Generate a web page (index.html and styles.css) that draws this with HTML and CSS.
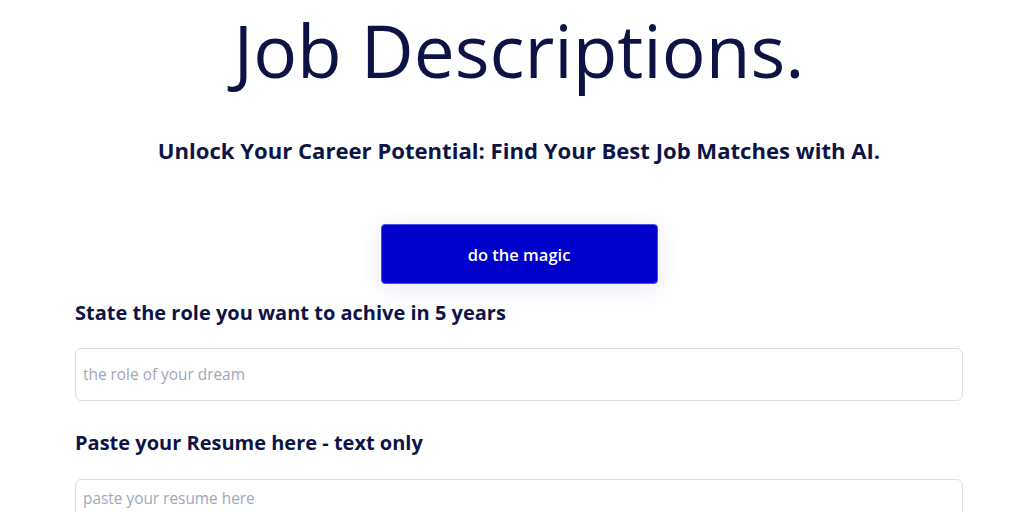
FILE: index.html
```html
<!DOCTYPE html>
<html lang="en">
<head>
<meta charset="utf-8">
<title>Job Descriptions</title>
<link rel="stylesheet" href="styles.css">
</head>
<body>
<main class="page">
  <h1 class="title">Job Descriptions.</h1>
  <p class="subtitle">Unlock Your Career Potential: Find Your Best Job Matches with AI.</p>
  <div class="actions">
    <button class="magic-btn" type="button">do the magic</button>
  </div>
  <form class="form">
    <label class="field-label" for="role">State the role you want to achive in 5 years</label>
    <input class="field-input" id="role" type="text" placeholder="the role of your dream">
    <label class="field-label" for="resume">Paste your Resume here - text only</label>
    <textarea class="field-area" id="resume" placeholder="paste your resume here"></textarea>
  </form>
</main>
</body>
</html>
```
FILE: styles.css
```css
* { box-sizing: border-box; }
html, body { margin: 0; padding: 0; background: #ffffff; }
body {
  font-family: "Open Sans", "Noto Sans", sans-serif;
  color: #0d1445;
  overflow: hidden;
}
.page {
  width: 888px;
  margin-left: 75px;
  display: flex;
  flex-direction: column;
}
.title {
  margin: 0;
  padding-top: 2px;
  font-size: 73px;
  font-weight: 400;
  line-height: 96px;
  text-align: center;
  color: #0d1445;
}
.subtitle {
  margin: 37px 0 0;
  font-size: 22.1px;
  font-weight: 700;
  line-height: 30px;
  text-align: center;
}
.actions {
  display: flex;
  justify-content: center;
  margin-top: 59px;
}
.magic-btn {
  width: 277px;
  height: 60px;
  background: #0000cc;
  border: 1px solid #4d4de6;
  border-radius: 4px;
  color: #ffffff;
  font-family: inherit;
  font-size: 16.5px;
  font-weight: 600;
  box-shadow: 0 4px 24px rgba(60, 60, 160, 0.12);
}
.form {
  display: flex;
  flex-direction: column;
}
.field-label {
  margin-top: 15px;
  font-size: 20px;
  font-weight: 700;
  line-height: 28px;
}
.field-input, .field-area {
  width: 100%;
  margin-top: 21px;
  border: 1px solid #dcdce8;
  border-radius: 6px;
  font-family: inherit;
  font-size: 15.4px;
  color: #0d1445;
  padding: 0 7px;
}
.field-input { height: 53px; }
.field-area { height: 120px; padding-top: 8px; resize: none; margin-top: 22px; }
.field-input + .field-label { margin-top: 28px; }
::placeholder { color: #a3a6ba; }
```
